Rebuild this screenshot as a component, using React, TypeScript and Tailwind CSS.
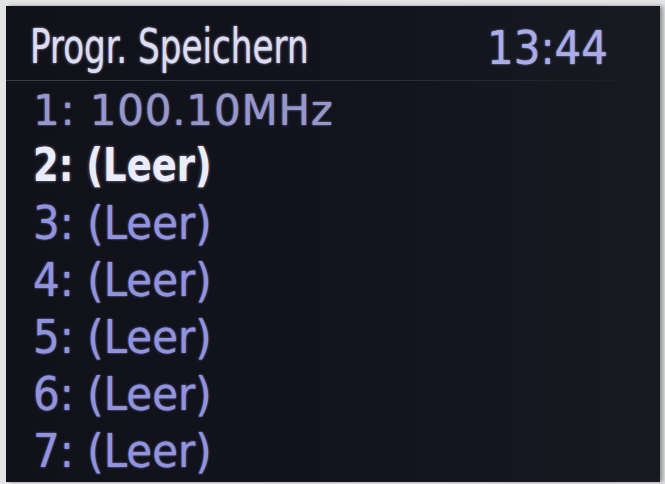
const slots = [
  { n: 1, label: "100.10MHz", tone: "dim" },
  { n: 2, label: "(Leer)", tone: "active" },
  { n: 3, label: "(Leer)", tone: "normal" },
  { n: 4, label: "(Leer)", tone: "normal" },
  { n: 5, label: "(Leer)", tone: "normal" },
  { n: 6, label: "(Leer)", tone: "normal" },
  { n: 7, label: "(Leer)", tone: "normal" },
];

function SlotRow({ n, label, tone }: { n: number; label: string; tone: string }) {
  if (tone === "active") {
    return (
      <div className="h-[57px] leading-[57px] text-[41px] font-bold text-[#ececff] [text-shadow:0_0_3px_rgba(220,220,255,0.6)] [font-family:'DejaVu_Sans_Condensed','DejaVu_Sans',sans-serif]">
        <span className="inline-block origin-[0_75%] scale-y-[1.12]">
          {n}: {label}
        </span>
      </div>
    );
  }
  return (
    <div
      className={`h-[57px] leading-[57px] text-[42px] [text-shadow:0_0_2px_currentColor] [font-family:'DejaVu_Sans',sans-serif] ${
        tone === "dim" ? "text-[#9698cc] tracking-[0.8px]" : "text-[#9293de]"
      }`}
    >
      <span className={`inline-block origin-[0_75%] ${tone === "dim" ? "scale-y-[1.0]" : "scale-y-[1.1]"}`}>
        {n}: {label}
      </span>
    </div>
  );
}

export default function App() {
  return (
    <div className="w-[665px] h-[484px] bg-[#e4e4e6] pt-[6px] pl-[6px] pr-[5px] pb-[2px]">
      <div className="h-full w-full overflow-hidden bg-gradient-to-r from-[#101119] via-[#12131c] to-[#181a22] shadow-[3px_0_4px_rgba(0,0,0,0.35)]">
        {/* Header */}
        <div className="flex justify-between pt-[22px] pb-[8px] pl-[24px] pr-[52px] h-[74px]">
          <span className="inline-block origin-[0_79%] scale-y-[1.24] text-[38px] leading-[44px] text-[#dcdcf2] [text-shadow:0_0_2px_rgba(220,220,245,0.9)] [font-family:'DejaVu_Sans_Condensed','DejaVu_Sans',sans-serif]">
            Progr. Speichern
          </span>
          <span className="inline-block origin-[0_79%] scale-y-[1.1] text-[42px] leading-[44px] text-[#abacea] [text-shadow:0_0_2px_currentColor] [font-family:'DejaVu_Sans',sans-serif]">
            13:44
          </span>
        </div>
        <div className="h-px mr-[40px] bg-gradient-to-r from-[#3a3b46] via-[#33343f] to-[#1c1d26]" />

        {/* Preset list */}
        <div className="mt-px pl-[27px]">
          {slots.map((s) => (
            <SlotRow key={s.n} n={s.n} label={s.label} tone={s.tone} />
          ))}
        </div>
      </div>
    </div>
  );
}
